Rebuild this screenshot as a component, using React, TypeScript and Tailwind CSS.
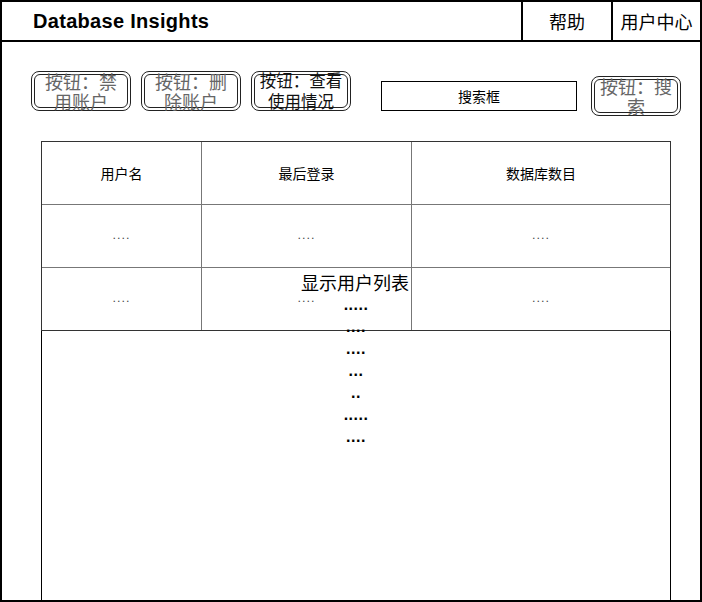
const cjk = "font-['Noto_Sans_CJK_SC',sans-serif]";

const rows = [
  ['....', '....', '....'],
  ['....', '....', '....'],
];

const dots = ['.....', '....', '....', '...', '..', '.....', '....'];

function SketchButton({ label, w, pad, small, dark }: { label: string; w: string; pad: string; small?: boolean; dark?: boolean }) {
  return (
    <div className={`${w} h-[40px] rounded-[8px] border border-[#222] p-[2px] shrink-0`}>
      <div
        className={`h-full rounded-[6px] border border-[#222] flex items-center justify-center ${pad} text-center ${cjk} ${
          small ? 'text-[16.5px] leading-[21px]' : 'text-[18px] leading-[20px]'
        } ${dark ? 'text-[#111]' : 'text-[#666]'}`}
      >
        {label}
      </div>
    </div>
  );
}

export default function App() {
  return (
    <div className="w-[702px] h-[602px] border-2 border-black bg-white overflow-hidden flex flex-col">
      {/* Header */}
      <div className="h-[40px] shrink-0 border-b-2 border-black flex">
        <div className="flex-1 flex items-center pl-[31px] font-['Liberation_Sans',sans-serif] font-bold text-[20px] tracking-[0.3px] text-black">
          Database Insights
        </div>
        <div className={`w-[90px] border-l-2 border-black flex items-center justify-center text-[18px] ${cjk}`}>帮助</div>
        <div className={`w-[89px] border-l-2 border-black flex items-center justify-center text-[18px] ${cjk}`}>用户中心</div>
      </div>

      {/* Toolbar */}
      <div className="h-[40px] flex items-start pl-[29px] mt-[29px] shrink-0">
        <SketchButton label="按钮：禁用账户" w="w-[100px]" pad="px-[7px]" />
        <div className="w-[10px]" />
        <SketchButton label="按钮：删除账户" w="w-[100px]" pad="px-[7px]" />
        <div className="w-[10px]" />
        <SketchButton label="按钮：查看使用情况" w="w-[100px]" pad="px-[1px]" small dark />
        <div className="ml-[30px] mt-[10px] w-[196px] h-[30px] border border-black flex items-center justify-center">
          <span className={`text-[14px] ${cjk}`}>搜索框</span>
        </div>
        <div className="ml-[14px] mt-[5px]">
          <SketchButton label="按钮：搜索" w="w-[90px]" pad="px-[1px]" />
        </div>
      </div>

      {/* Table + list */}
      <div className="relative ml-[39px] mt-[30px] w-[630px] flex-1 flex flex-col">
        <div className="border border-[#333] grid grid-cols-[159px_210px_259px] text-[14px]">
          {['用户名', '最后登录', '数据库数目'].map((h, i) => (
            <div
              key={h}
              className={`h-[62px] flex items-center justify-center ${cjk} text-black ${i > 0 ? 'border-l border-[#777]' : ''}`}
            >
              {h}
            </div>
          ))}
          {rows.map((r, ri) =>
            r.map((c, ci) => (
              <div
                key={`${ri}-${ci}`}
                className={`h-[63px] border-t border-[#777] flex items-center justify-center text-[11px] text-[#444] font-['DejaVu_Sans',sans-serif] tracking-[1px] ${
                  ci > 0 ? 'border-l border-[#777]' : ''
                }`}
              >
                {c}
              </div>
            ))
          )}
        </div>
        <div className="flex-1 border-x border-black" />

        {/* Overlay label */}
        <div className="absolute left-0 right-0 top-[129px] flex flex-col items-center">
          <div className={`text-[18px] leading-[24px] text-black ${cjk} -ml-[2px]`}>显示用户列表</div>
          {dots.map((d, i) => (
            <div key={i} className="font-['Liberation_Sans',sans-serif] font-bold text-[16px] leading-[22px] text-black tracking-[0.5px]">
              {d}
            </div>
          ))}
        </div>
      </div>
    </div>
  );
}
